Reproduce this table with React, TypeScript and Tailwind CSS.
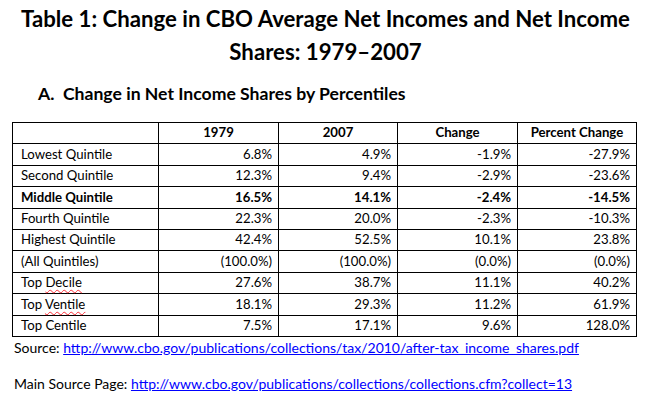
import React from 'react';

type Row = {
  label: string;
  v1979: string;
  v2007: string;
  change: string;
  pct: string;
  bold?: boolean;
  squiggle?: string;
};

const rows: Row[] = [
  { label: 'Lowest Quintile', v1979: '6.8%', v2007: '4.9%', change: '-1.9%', pct: '-27.9%' },
  { label: 'Second Quintile', v1979: '12.3%', v2007: '9.4%', change: '-2.9%', pct: '-23.6%' },
  { label: 'Middle Quintile', v1979: '16.5%', v2007: '14.1%', change: '-2.4%', pct: '-14.5%', bold: true },
  { label: 'Fourth Quintile', v1979: '22.3%', v2007: '20.0%', change: '-2.3%', pct: '-10.3%' },
  { label: 'Highest Quintile', v1979: '42.4%', v2007: '52.5%', change: '10.1%', pct: '23.8%' },
  { label: '(All Quintiles)', v1979: '(100.0%)', v2007: '(100.0%)', change: '(0.0%)', pct: '(0.0%)' },
  { label: 'Top', squiggle: 'Decile', v1979: '27.6%', v2007: '38.7%', change: '11.1%', pct: '40.2%' },
  { label: 'Top', squiggle: 'Ventile', v1979: '18.1%', v2007: '29.3%', change: '11.2%', pct: '61.9%' },
  { label: 'Top Centile', v1979: '7.5%', v2007: '17.1%', change: '9.6%', pct: '128.0%' },
];

const cell = 'border border-black align-bottom pb-[2px] leading-[17px]';

const App: React.FC = () => {
  return (
    <div className="w-[651px] h-[400px] bg-white text-black overflow-hidden font-['Lato',_'Open_Sans',_sans-serif]">
      {/* title */}
      <h1 className="pt-[2px] text-center text-[22.2px] leading-[33px] font-bold">
        Table 1: Change in CBO Average Net Incomes and Net Income
        <br />
        Shares: 1979–2007
      </h1>

      <h2 className="mt-[15px] pl-[38px] text-[17.6px] leading-[22px] font-bold">
        A.&nbsp; Change in Net Income Shares by Percentiles
      </h2>

      <table className="mt-[17px] ml-[12px] w-[624px] border-collapse table-fixed text-[13.2px]">
        <colgroup>
          <col className="w-[146px]" />
          <col className="w-[120px]" />
          <col className="w-[119px]" />
          <col className="w-[120px]" />
          <col className="w-[119px]" />
        </colgroup>
        <thead>
          <tr className="h-[21.4px] font-bold">
            <th className={cell}></th>
            <th className={`${cell} text-center`}>1979</th>
            <th className={`${cell} text-center`}>2007</th>
            <th className={`${cell} text-center`}>Change</th>
            <th className={`${cell} text-center`}>Percent Change</th>
          </tr>
        </thead>
        <tbody>
          {rows.map((r) => (
            <tr key={r.label + (r.squiggle ?? '')} className={`h-[21.4px] ${r.bold ? 'font-bold' : 'font-normal'}`}>
              <td className={`${cell} pl-[8px] text-left`}>
                {r.label}
                {r.squiggle && (
                  <>
                    {' '}
                    <span className="underline decoration-wavy decoration-red-500 decoration-[1px] underline-offset-[2px]">
                      {r.squiggle}
                    </span>
                  </>
                )}
              </td>
              <td className={`${cell} pr-[6px] text-right`}>{r.v1979}</td>
              <td className={`${cell} pr-[6px] text-right`}>{r.v2007}</td>
              <td className={`${cell} pr-[6px] text-right`}>{r.change}</td>
              <td className={`${cell} pr-[6px] text-right`}>{r.pct}</td>
            </tr>
          ))}
        </tbody>
      </table>

      <p className="pl-[14px] text-[14px] leading-[20px] mt-[1px]">
        Source:{' '}
        <a className="text-[#0000ff] underline" href="#">
          http://www.cbo.gov/publications/collections/tax/2010/after-tax_income_shares.pdf
        </a>
      </p>
      <p className="pl-[14px] text-[14px] leading-[20px] mt-[16px]">
        Main Source Page:{' '}
        <a className="text-[#0000ff] underline" href="#">
          http://www.cbo.gov/publications/collections/collections.cfm?collect=13
        </a>
      </p>
    </div>
  );
};

export default App;
